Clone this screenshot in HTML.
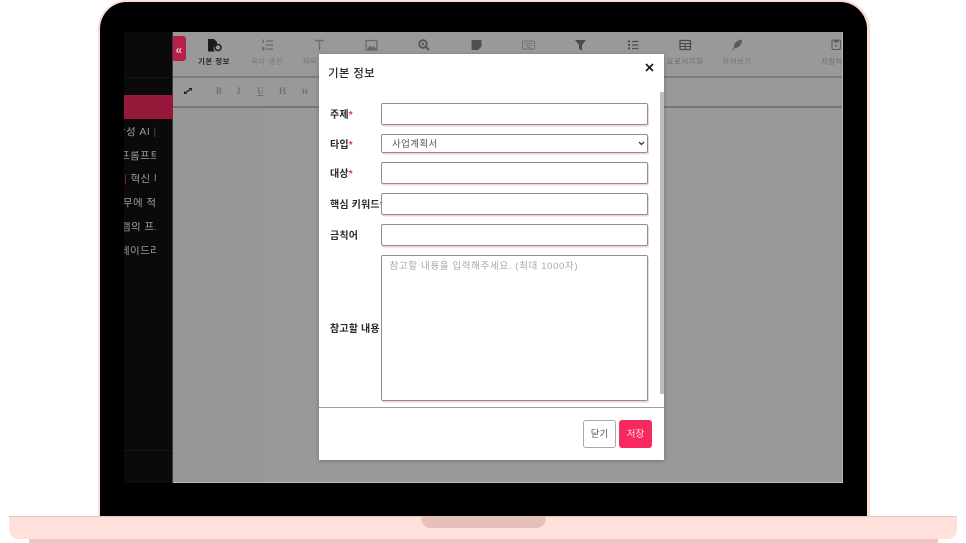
<!DOCTYPE html>
<html lang="ko"><head><meta charset="utf-8">
<style>
*{box-sizing:border-box}
html,body{margin:0;padding:0;background:#fff}
body{width:966px;height:543px;overflow:hidden;position:relative;font-family:"Liberation Sans","Noto Sans CJK KR",sans-serif}
.a{position:absolute}
.t{position:absolute;white-space:nowrap;line-height:1;filter:blur(.25px)}
.tb{font-size:7.5px;color:#6e6e6e;letter-spacing:.45px;top:58px;transform:translateX(-50%)}
.fi{position:absolute;left:381px;width:267px;background:#fff;border:1px solid #8f8f8f;border-radius:2px;box-shadow:1px 1.5px 0 #f7cfd6}
.lb{position:absolute;left:330px;font-size:10px;font-weight:700;color:#2a2a2a;line-height:1;white-space:nowrap;letter-spacing:.15px;filter:blur(.25px)}
.lb i{color:#e8315f;font-style:normal}
.sd{position:absolute;left:124px;width:32px;overflow:hidden;font-size:10.5px;color:#9b9b9b;white-space:nowrap;line-height:1;letter-spacing:.4px;filter:blur(.25px)}
.sd span{position:relative}
.ed{position:absolute;top:87px;font-size:9px;color:#6f6f6f;font-weight:700;font-family:"Liberation Serif",serif;line-height:1}
</style></head><body>

<!-- laptop body -->
<div class="a" style="left:98px;top:0;width:772px;height:518px;background:#ffdcd8;border-radius:29px 29px 0 0"></div>
<div class="a" style="left:100px;top:2px;width:767px;height:515px;background:#000;border-radius:27px 27px 0 0"></div>

<!-- base -->
<div class="a" style="left:29px;top:538px;width:909px;height:5px;background:#ecc8c2"></div>
<div class="a" style="left:9px;top:516px;width:948px;height:23px;background:#ffe0db;border-top:1px solid #e3c9c5;border-radius:0 0 10px 10px"></div>
<div class="a" style="left:421px;top:516px;width:125px;height:12px;background:#e7c0ba;border-radius:0 0 10px 10px"></div>

<!-- screen -->
<div class="a" style="left:124px;top:32px;width:719px;height:451px;background:#999;overflow:hidden;border-right:1px solid #b5b5b5;border-bottom:1px solid #bdbdbd"></div>
<div class="a" style="left:173px;top:108px;width:92px;height:374px;background:#979797"></div>
<div class="a" style="left:124px;top:32px;width:49px;height:451px;background:#0a0a0b;border-right:1px solid #3a3a3a"></div>
<div class="a" style="left:124px;top:77px;width:48px;height:1px;background:#151515"></div>
<div class="a" style="left:124px;top:450px;width:48px;height:1px;background:#161616"></div>
<div class="a" style="left:124px;top:95px;width:49px;height:24px;background:#96183a"></div>

<div class="sd" style="top:127px"><span style="left:-8px">작성 AI <b style="color:#35507a;font-weight:400">|</b></span></div>
<div class="sd" style="top:151px"><span style="left:-4px">프롬프트</span></div>
<div class="sd" style="top:174px"><span style="left:0"><b style="color:#8c2a35;font-weight:400">|</b> 혁신 다</span></div>
<div class="sd" style="top:198px"><span style="left:-1px">무에 적</span></div>
<div class="sd" style="top:222px"><span style="left:-3px">램의 프로</span></div>
<div class="sd" style="top:246px"><span style="left:-4px">레이드라</span></div>

<!-- collapse button -->
<div class="a" style="left:173px;top:36px;width:13px;height:25px;background:#b81f49;border-radius:0 3px 3px 0"></div>
<div class="t" style="left:175.500px;top:44px;font-size:12px;font-weight:700;color:#e3bcc7">«</div>

<!-- toolbar lines -->
<div class="a" style="left:173px;top:76px;width:669px;height:2px;background:#7c7c7c"></div>
<div class="a" style="left:173px;top:106px;width:669px;height:2px;background:#777"></div>

<!-- toolbar icons -->
<svg class="a" style="left:173px;top:32px;filter:blur(.3px)" width="669" height="30" viewBox="173 32 669 30">
<path d="M208 39h6l3 3v2.500a4 4 0 0 0-2 7h-7z" fill="#1c1c1c"/><circle cx="218" cy="47.500" r="3" fill="none" stroke="#1c1c1c" stroke-width="1.500"/>
<g stroke="#6c6c6c" stroke-width="1.200"><path d="M266 41h7M266 45h7M266 49h7"/></g>
<g fill="#6c6c6c"><rect x="262.500" y="39.500" width="1.500" height="3.500"/><rect x="262" y="47" width="2.500" height="3.500"/></g>
<path d="M315 40.500h9M319.500 40.500v10" stroke="#6c6c6c" stroke-width="1.400" fill="none"/>
<rect x="366" y="40.500" width="11" height="9.500" fill="none" stroke="#666" stroke-width="1.200"/><path d="M367 49.500l3-4 2 2 2-1.500 2 3.500z" fill="#666"/>
<circle cx="423" cy="44" r="3.800" fill="none" stroke="#555" stroke-width="1.800"/><path d="M426 47l3 3" stroke="#555" stroke-width="2"/><circle cx="423" cy="44" r="1.300" fill="#555"/>
<path d="M471.500 40h10v6.500l-3.500 3.500h-5.500a1 1 0 0 1-1-1z" fill="#4f4f4f"/>
<rect x="522.500" y="41" width="12" height="8" rx="1" fill="none" stroke="#707070" stroke-width="1"/><path d="M525 43.500h7M525 45.500h7M526.500 47.500h4" stroke="#707070" stroke-width=".7"/>
<path d="M575 40h11l-4 5v5.500l-3-1.500V45z" fill="#4c4c4c"/>
<g fill="#4f4f4f"><rect x="628" y="40.500" width="2" height="2"/><rect x="628" y="44" width="2" height="2"/><rect x="628" y="47.500" width="2" height="2"/></g><path d="M632 41.500h6.500M632 45h6.500M632 48.500h6.500" stroke="#4f4f4f" stroke-width="1.200"/>
<rect x="680" y="40.500" width="10.500" height="9" rx="1" fill="none" stroke="#4a4a4a" stroke-width="1.300"/><path d="M680 43.500h10.500M680 46.500h10.500M685.200 43.500v6" stroke="#4a4a4a" stroke-width="1.100"/>
<path d="M732 50l2-2c-1-4 3-8 8-8.500 0 5-3 8.500-7 8.500l-2 2.500z" fill="#5a5a5a"/>
<rect x="832" y="40" width="8.500" height="9.500" rx="1.500" fill="none" stroke="#5c5c5c" stroke-width="1.100"/><rect x="834" y="40.500" width="4.500" height="2" fill="#5c5c5c"/><circle cx="836.200" cy="45.800" r="1" fill="#5c5c5c"/>
</svg>

<!-- toolbar labels -->
<div class="t tb" style="left:214px;color:#262626;font-weight:700;font-size:7.500px">기본 정보</div>
<div class="t tb" style="left:267px;color:#7a7a7a">목차 생성</div>
<div class="t tb" style="left:310px;color:#777">제목</div>
<div class="t tb" style="left:685px;color:#707070">표로시각화</div>
<div class="t tb" style="left:737px;color:#707070">이어쓰기</div>
<div class="t" style="left:821px;top:58px;width:21px;overflow:hidden;font-size:7.500px;color:#707070;letter-spacing:.4px">저장하</div>

<!-- editor toolbar -->
<svg class="a" style="left:184px;top:88px" width="8" height="6" viewBox="0 0 8 6"><path d="M2 4.200l4-2.400" stroke="#1c1c1c" stroke-width="1.300"/><path d="M0 3v3h3.500zM8 0H4.500L8 3z" fill="#1c1c1c"/></svg>
<div class="ed" style="left:216px">B</div>
<div class="ed" style="left:237px;font-style:italic">I</div>
<div class="ed" style="left:257px;text-decoration:underline">U</div>
<div class="ed" style="left:279px">H</div>
<div class="ed" style="left:302px;font-size:7.500px;top:88px">H</div>

<!-- modal -->
<div class="a" style="left:319px;top:54px;width:345px;height:406px;background:#fff;box-shadow:0 1px 4px rgba(0,0,0,.25)"></div>
<div class="t" style="left:328px;top:69px;font-size:11.500px;font-weight:500;color:#2b2b2b;letter-spacing:.3px">기본 정보</div>
<svg class="a" style="left:644.500px;top:63px" width="9" height="9" viewBox="0 0 9 9"><path d="M1 1l7 7M8 1L1 8" stroke="#1a1a1a" stroke-width="1.700"/></svg>

<!-- scrollbar -->
<div class="a" style="left:660px;top:92px;width:4px;height:302px;background:#bdbdbd;border-radius:1px"></div>

<!-- labels -->
<div class="lb" style="top:111px">주제<i>*</i></div>
<div class="lb" style="top:141px">타입<i>*</i></div>
<div class="lb" style="top:170px">대상<i>*</i></div>
<div class="lb" style="top:201px">핵심 키워드<i>*</i></div>
<div class="lb" style="top:232px">금칙어</div>
<div class="lb" style="top:325px">참고할 내용</div>

<!-- fields -->
<div class="fi" style="top:103px;height:22px"></div>
<div class="fi" style="top:134px;height:19px"></div>
<div class="t" style="left:392px;top:140px;font-size:9.500px;color:#555;letter-spacing:.4px">사업계획서</div>
<svg class="a" style="left:638px;top:141px" width="7" height="5" viewBox="0 0 7 5"><path d="M1 1l2.500 2.500L6 1" fill="none" stroke="#333" stroke-width="1.300"/></svg>
<div class="fi" style="top:162px;height:22px"></div>
<div class="fi" style="top:193px;height:22px"></div>
<div class="fi" style="top:224px;height:22px"></div>
<div class="fi" style="top:255px;height:146px"></div>
<div class="t" style="left:389.500px;top:262px;font-size:9.500px;color:#a8a8a8;letter-spacing:.65px">참고할 내용을 입력해주세요. (최대 1000자)</div>

<!-- footer -->
<div class="a" style="left:319px;top:407px;width:345px;height:1px;background:#9e9e9e"></div>
<div class="a" style="left:583px;top:420px;width:33px;height:28px;background:#fff;border:1px solid #a9a9a9;border-radius:3px"></div>
<div class="t" style="left:583px;top:430px;width:33px;text-align:center;font-size:9.500px;color:#555">닫기</div>
<div class="a" style="left:619px;top:420px;width:33px;height:28px;background:#f72a60;border-radius:3px"></div>
<div class="t" style="left:619px;top:430px;width:33px;text-align:center;font-size:9.500px;color:#ffe3ea">저장</div>

</body></html>
